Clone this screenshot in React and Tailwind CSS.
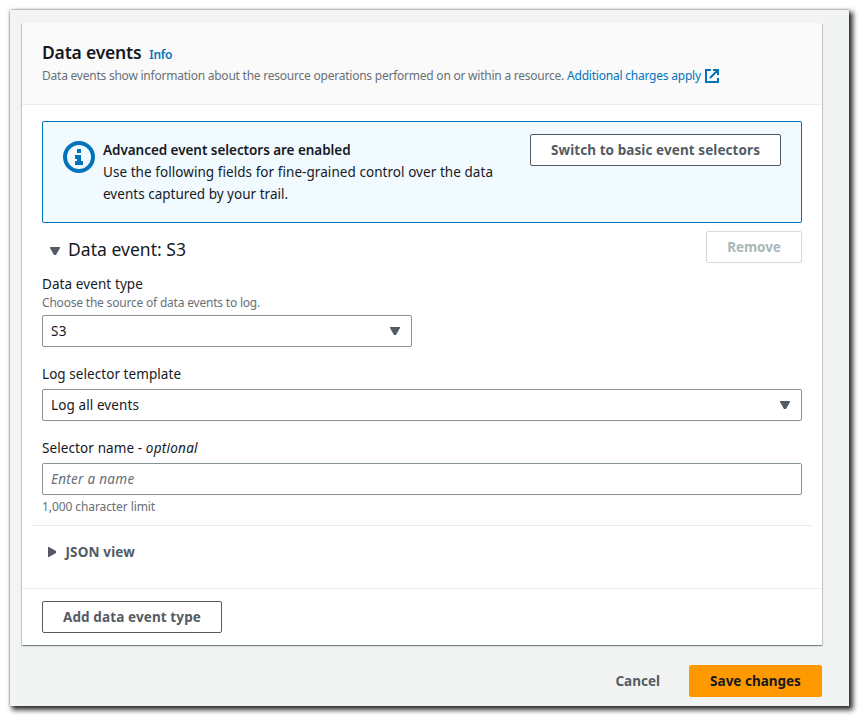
import React from 'react';

const Button = ({ className = '', children }) => (
  <button
    type="button"
    className={`flex h-8 shrink-0 items-center justify-center whitespace-nowrap rounded-xs border font-bold ${className}`}
  >
    {children}
  </button>
);

const Caret = ({ className = '' }) => (
  <svg className={`shrink-0 ${className}`} width="10" height="8" viewBox="0 0 10 8" fill="#545b64">
    <path d="M0 0h10v1L6 8H4L0 1z" />
  </svg>
);

const Select = ({ className = '', children }) => (
  <div
    className={`flex h-8 items-center justify-between rounded-xs border border-[#879596] bg-white pr-[11px] pl-2 text-[#16191f] ${className}`}
  >
    {children}
    <Caret />
  </div>
);

const InfoIcon = () => (
  <svg className="shrink-0" width="32" height="32" viewBox="0 0 32 32" fill="#0073bb">
    <circle cx="16" cy="16" r="14" fill="none" stroke="#0073bb" strokeWidth="4" />
    <path d="M14 8h4v4h-4zM12 14h6v6h2v4h-8v-4h2v-2h-2z" />
  </svg>
);

const ExternalIcon = () => (
  <svg className="ml-1 shrink-0" width="14" height="14" viewBox="0 0 14 14" fill="none" stroke="#0073bb" strokeWidth="2">
    <path d="M6 1H1v12h12V9M8 1h5v5M13 1L5 9" />
  </svg>
);

export default function App() {
  return (
    <div className="h-[724px] w-[867px] bg-white pt-[10px] pl-[10px] font-['Noto_Sans','Open_Sans',sans-serif] text-[13.5px] leading-[22px] text-[#16191f]">
      <main className="h-[696px] w-[839px] bg-[#f2f3f3] px-3 pt-[13px] shadow-[0_0_2px_rgba(0,0,0,0.45),3px_3px_5px_1px_rgba(0,0,0,0.8)]">
        <section className="h-[622px] w-[800px] bg-white shadow-[0_1px_1px_0_rgba(0,28,36,0.3),1px_1px_1px_0_rgba(0,28,36,0.15),-1px_1px_1px_0_rgba(0,28,36,0.15)]">
          <header className="h-[82px] border-b border-[#eaeded] bg-[#fafafa] px-5 pt-[18px]">
            <div className="flex h-[22px] items-baseline">
              <h2 className="whitespace-nowrap text-[17.5px] leading-[22px] font-semibold tracking-[-0.2px]">Data events</h2>
              <a className="ml-2 text-[12px] font-semibold tracking-[-0.3px] text-[#0073bb]">Info</a>
            </div>
            <p className="mt-0.5 flex items-center whitespace-nowrap text-[12px] leading-[22px] text-[#687078]">
              <span className="mr-[3px] tracking-[-0.232px]">
                Data events show information about the resource operations performed on or within a resource.
              </span>
              <a className="flex items-center tracking-[-0.22px] text-[#0073bb]">
                Additional charges apply
                <ExternalIcon />
              </a>
            </p>
          </header>

          <div className="flex h-[484px] flex-col border-b border-[#eaeded] px-5 pt-4">
            <div className="flex h-[102px] shrink-0 items-start rounded-xs border border-[#0073bb] bg-[#f1faff] px-5">
              <div className="mt-[19px]">
                <InfoIcon />
              </div>
              <div className="mt-[17px] ml-2 flex-1 whitespace-nowrap">
                <div className="font-semibold tracking-[-0.05px]">Advanced event selectors are enabled</div>
                <div className="tracking-[0.057px]">Use the following fields for fine-grained control over the data</div>
                <div className="tracking-[0.02px]">events captured by your trail.</div>
              </div>
              <Button className="mt-3 w-[251px] border-[#545b64] bg-white tracking-[0.08px] text-[#545b64]">
                Switch to basic event selectors
              </Button>
            </div>

            <div className="mt-2 flex h-8 shrink-0 items-center">
              <Caret className="mt-2 ml-2" />
              <h3 className="mt-1 ml-2 flex-1 text-[17.5px] leading-[22px] tracking-[0.03px] whitespace-nowrap">Data event: S3</h3>
              <Button className="w-24 border-[#d5dbdb] bg-white tracking-[-0.05px] text-[#aab7b8]">Remove</Button>
            </div>

            <div className="mt-[10px] tracking-[0.09px]">Data event type</div>
            <div className="text-[12px] leading-4 tracking-[-0.2px] text-[#687078]">Choose the source of data events to log.</div>
            <Select className="mt-1 w-[370px] shrink-0">
              <span className="tracking-[0.4px]">S3</span>
            </Select>

            <div className="mt-4 tracking-[0.06px]">Log selector template</div>
            <Select className="mt-1 shrink-0">
              <span className="tracking-[0.1px]">Log all events</span>
            </Select>

            <div className="mt-4 tracking-[0.1px]">
              Selector name - <i className="tracking-[0.25px]">optional</i>
            </div>
            <input
              type="text"
              placeholder="Enter a name"
              className="mt-1 h-8 shrink-0 rounded-xs border border-[#879596] bg-white px-2 tracking-[0.28px] placeholder:text-[#687078] placeholder:italic"
            />
            <div className="mt-1 text-[12px] leading-4 tracking-[-0.09px] text-[#687078]">1,000 character limit</div>

            <div className="-mx-[10px] mt-[10px] flex items-center border-t border-[#eaeded] pt-[15px] pl-4 font-bold text-[#545b64]">
              <svg width="8" height="10" viewBox="0 0 8 10" fill="#545b64">
                <path d="M0 0h1l7 4v2l-7 4H0z" />
              </svg>
              <span className="ml-[9.5px] tracking-[0.15px]">JSON view</span>
            </div>
          </div>

          <footer className="px-5 pt-3">
            <Button className="w-[180px] border-[#545b64] bg-white tracking-[0.11px] text-[#545b64]">Add data event type</Button>
          </footer>
        </section>

        <div className="mt-5 flex w-[800px] items-center justify-end">
          <Button className="mr-7 border-transparent text-[#545b64]">Cancel</Button>
          <Button className="w-[133px] border-[#ff9900] bg-[#ff9900] text-[#16191f]">Save changes</Button>
        </div>
      </main>
    </div>
  );
}
